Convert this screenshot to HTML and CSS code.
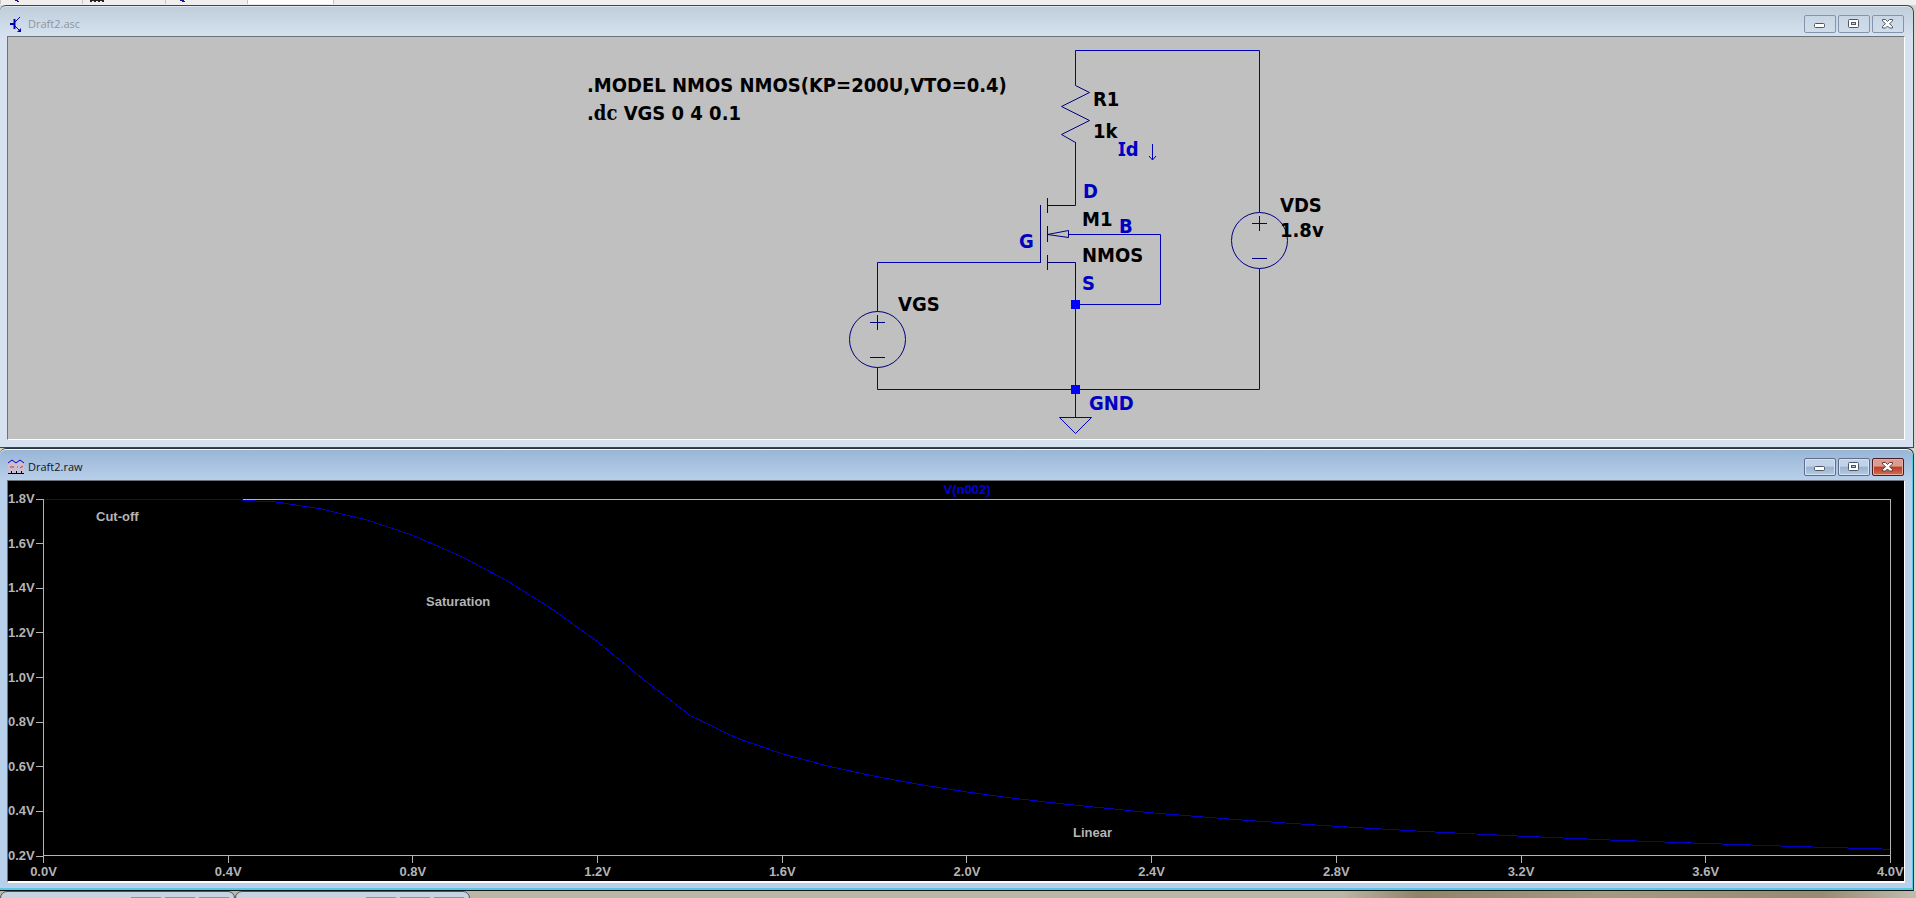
FILE: index.html
```html
<!DOCTYPE html>
<html lang="en">
<head>
<meta charset="utf-8">
<title>Draft2</title>
<link rel="stylesheet" href="styles.css">
</head>
<body>
<div class="tabstrip" aria-hidden="true">
  <svg class="tabstrip-art" width="340" height="4" viewBox="0 0 340 4">
    <path d="M247 0h87v4h-87z" fill="#fff"/>
    <path d="M.5 0v4M82.500 0v4M165.500 0v4M247.500 0v4M333.500 0v4" stroke="#c4c4c4"/>
    <path d="M15 0h3v1h1v1h-2v-1h-2zM180 0h4v1h1v1h-3v-1h-2z" fill="#1414a0"/>
    <path d="M90 0h14v1h-14zM90 1h2v1h-2zM94 1h2v1h-2zM98 1h2v1h-2zM102 1h2v1h-2z" fill="#222"/>
  </svg>
</div>

<main class="workspace">
  <section class="window" aria-label="Draft2.asc">
    <header class="titlebar">
      <svg class="title-icon" width="16" height="18" viewBox="-2 0 16 18" fill="none" stroke="#0000b4">
        <path d="M0 9h4" stroke-width="2"/><path d="M4.500 4v10" stroke-width="2"/><path d="M5 7l5-5M5 11l4 4"/><path d="M11 17v-4l-4 4z" fill="#0000b4" stroke="none"/>
      </svg>
      <h1 class="title">Draft2.asc</h1>
      <div class="controls">
        <button class="control" aria-label="Minimize"><svg width="12" height="10" viewBox="0 0 12 10"><rect x=".5" y="4.500" width="10" height="4" rx="1" fill="#fff" stroke="#4c5664"/></svg></button>
        <button class="control" aria-label="Maximize"><svg width="12" height="10" viewBox="0 0 12 10"><rect x=".5" y=".5" width="10" height="8" rx="1" fill="#fff" stroke="#4c5664"/><rect x="3.500" y="3.500" width="4" height="2" fill="#c6d4e4" stroke="#4c5664"/></svg></button>
        <button class="control" aria-label="Close"><svg width="12" height="10" viewBox="0 0 12 10"><path d="M.5 .5h3l2 2 2-2h3v1.500l-3 2.700 3 2.800v1.500h-3l-2-2-2 2h-3v-1.500l3-2.800-3-2.700z" fill="#fff" stroke="#4c5664"/></svg></button>
      </div>
    </header>
    <div class="client schematic">
      <svg class="schematic-art" viewBox="8 37 1896 402" role="img" aria-label="NMOS circuit">
        <g class="wire">
          <path d="M1075.500 85.500V50.500H1259.500V212.500M1259.500 268.500V389.500H877.500V367.500M1075.500 142V205.500M877.500 311.500V262.500H1040.500M1068.500 234.500H1160.500V304.500H1075.500M1075.500 290V417.500"/>
          <path d="M1059.500 417.500H1091.500L1075.500 433.500Z"/>
        </g>
        <g class="part">
          <path d="M1075.500 85.500L1089.500 92.500L1061.500 106.500L1089.500 120.500L1061.500 134.500L1075.500 142.500"/>
          <path d="M1040.500 205V263M1047.500 198V213M1047.500 226V242M1047.500 255V270M1047.500 205.500H1075.500M1047.500 262.500H1075.500V290M1047.500 234.500L1068.500 230.500V237.500Z"/>
          <circle cx="877.500" cy="339.500" r="28"/>
          <path d="M870 322.500h15M877.500 315v15M870 357.500h15"/>
          <circle cx="1259.500" cy="240.500" r="28"/>
          <path d="M1252 223.500h15M1259.500 216v15M1252 258.500h15"/>
        </g>
        <path class="node" d="M1071 300h9v9h-9zM1071 385h9v9h-9z"/>
        <g class="text">
          <text x="587" y="92">.MODEL NMOS NMOS(KP=200U,VTO=0.4)</text>
          <text x="587" y="120">.<tspan class="alt">dc</tspan> VGS 0 4 0.1</text>
          <text x="1093" y="106">R1</text>
          <text x="1093" y="138">1k</text>
          <text x="1082" y="226">M1</text>
          <text x="1082" y="262">NMOS</text>
          <text x="898" y="311">VGS</text>
          <text x="1280" y="212">VDS</text>
          <text x="1280" y="237">1.8v</text>
        </g>
        <g class="text label">
          <text x="1118" y="156"><tspan class="barred">I</tspan>d</text>
          <text x="1083" y="198">D</text>
          <text x="1119" y="233">B</text>
          <text x="1019" y="248">G</text>
          <text x="1082" y="290">S</text>
          <text x="1089" y="410">GND</text>
        </g>
        <path class="current" d="M1152.500 144V159.500M1149 156L1152.500 160L1156 156"/>
      </svg>
    </div>
  </section>

  <section class="window active" aria-label="Draft2.raw">
    <header class="titlebar">
      <svg class="title-icon" width="16" height="18" viewBox="0 0 16 18" fill="none">
        <rect y="4" width="16" height="11" fill="#d8bcc8" opacity=".7"/>
        <path d="M0 5l4-3 4 3 4-3 4 3" stroke="#0000c8"/><path d="M2 9h4M9 9h1M12 10l3-2" stroke="#c83232"/><path d="M0 15.500h16M3.500 13v2M8.500 13v2M13.500 13v2" stroke="#000"/>
      </svg>
      <h2 class="title">Draft2.raw</h2>
      <div class="controls">
        <button class="control" aria-label="Minimize"><svg width="12" height="10" viewBox="0 0 12 10"><rect x=".5" y="4.500" width="10" height="4" rx="1" fill="#fff" stroke="#4c5664"/></svg></button>
        <button class="control" aria-label="Maximize"><svg width="12" height="10" viewBox="0 0 12 10"><rect x=".5" y=".5" width="10" height="8" rx="1" fill="#fff" stroke="#4c5664"/><rect x="3.500" y="3.500" width="4" height="2" fill="#a8c0dc" stroke="#4c5664"/></svg></button>
        <button class="control close" aria-label="Close"><svg width="12" height="10" viewBox="0 0 12 10"><path d="M.5 .5h3l2 2 2-2h3v1.500l-3 2.700 3 2.800v1.500h-3l-2-2-2 2h-3v-1.500l3-2.800-3-2.700z" fill="#fff" stroke="#5c3a40"/></svg></button>
      </div>
    </header>
    <div class="client chart">
      <div class="trace-name">V(n002)</div>
      <div class="y-axis">
        <span>1.8V</span><span>1.6V</span><span>1.4V</span><span>1.2V</span><span>1.0V</span><span>0.8V</span><span>0.6V</span><span>0.4V</span><span>0.2V</span>
      </div>
      <div class="plot">
        <svg class="trace" viewBox="0 0 4000 1600" preserveAspectRatio="none" role="img" aria-label="V(n002) against VGS">
          <polyline points="0,-2 430,-2 431,2 500,8 600,40 700,90 800,160 900,250 1000,360 1100,490 1200,640 1300,810 1400,971 1500,1072 1600,1144 1700,1200 1800,1245 1900,1283 2000,1316 2100,1344 2200,1368 2400,1410 2600,1443 2800,1471 3000,1495 3200,1515 3400,1533 3600,1548 3800,1562 4000,1574"/>
        </svg>
        <span class="region cutoff">Cut-off</span>
        <span class="region saturation">Saturation</span>
        <span class="region linear">Linear</span>
      </div>
      <div class="x-axis">
        <span>0.0V</span><span>0.4V</span><span>0.8V</span><span>1.2V</span><span>1.6V</span><span>2.0V</span><span>2.4V</span><span>2.8V</span><span>3.2V</span><span>3.6V</span><span>4.0V</span>
      </div>
    </div>
  </section>
</main>

<footer class="minimized" aria-hidden="true">
  <div class="stub"><i></i><i></i><i></i></div>
  <div class="stub"><i></i><i></i><i></i></div>
</footer>
</body>
</html>
```

FILE: styles.css
```css
* { box-sizing: border-box; }

body {
  margin: 0;
  min-height: 100vh;
  display: flex;
  flex-direction: column;
  background: #d6d3cb;
  font-family: "Open Sans", "Noto Sans", sans-serif;
}

.tabstrip { height: 5px; background: #f0efee; overflow: hidden; }
.tabstrip-art { display: block; }

.workspace {
  flex: 1;
  display: flex;
  flex-direction: column;
  padding-right: 2px;
}

.window {
  display: flex;
  flex-direction: column;
  padding: 0 8px 7px 7px;
  border: solid #3c444e;
  border-width: 1px 1px 1px 0;
  border-radius: 6px 7px 0 0;
  background: linear-gradient(#bfcddb, #d6e2ef 31px);
  box-shadow: inset 0 1px #dfe8f0;
}

.window.active {
  flex: 1;
  border-color: #2c343c;
  border-bottom-color: #101418;
  background: linear-gradient(#98b4d6, #b9d0ea 32px);
  box-shadow: inset 0 1px #f4f8fc, inset -1px -2px #58c8e4;
}

.titlebar {
  height: 30px;
  padding: 5px 1px 0 1px;
  display: flex;
  align-items: center;
  gap: 4px;
}
.active .titlebar { height: 31px; }

.title-icon { flex: none; }

.title {
  flex: 1;
  margin: 0;
  font-size: 11px;
  font-weight: 400;
  line-height: 16px;
  color: #8d959e;
}
.active .title { color: #10161e; }

.controls { display: flex; gap: 2px; }

.control {
  width: 32px;
  height: 18px;
  padding: 0;
  display: grid;
  place-items: center;
  border: 1px solid #8395ae;
  border-radius: 2px;
  background: linear-gradient(#c8d6e4, #d0dcea);
}
.active .control {
  border-color: #5c6e8c;
  background: linear-gradient(#c2d3e8 45%, #98b2d0 50%, #b4cbe6);
  box-shadow: inset 0 0 0 1px #d4e2f2;
}
.active .close {
  border-color: #4c1c24;
  background: linear-gradient(#dc9c90 45%, #b83c24 50%, #d07050);
  box-shadow: inset 0 0 0 1px #e4aca0;
}

.client {
  border: 1px solid #fff;
  border-top-color: #6c7278;
  border-left-color: #6c7278;
}

.schematic { background: #c0c0c0; }
.schematic-art { display: block; width: 100%; }
.wire, .part, .current { fill: none; stroke: #0000b8; }
.part { stroke: #000080; }
.node { fill: #0000ff; }
.text {
  font-family: "DejaVu Sans Condensed", "Noto Sans", sans-serif;
  font-size: 20px;
  font-weight: 700;
  fill: #000;
}
.label { fill: #0000c0; }
.alt { font-family: "DejaVu Serif Condensed", "DejaVu Serif", serif; }
.barred { font-family: "Noto Sans", sans-serif; }

.chart {
  flex: 1;
  display: grid;
  grid-template: 18px 1fr 25px / 35px 1fr;
  padding-right: 13px;
  border-bottom-width: 2px;
  background: #000;
  color: #b4b4b4;
  font: 700 13px/18px "Liberation Sans", sans-serif;
}

.trace-name {
  grid-area: 1 / 2;
  text-align: center;
  color: #0000d8;
}

.y-axis {
  grid-area: 2 / 1;
  margin: -9px 0;
  display: flex;
  flex-direction: column;
  justify-content: space-between;
}
.y-axis span { display: flex; align-items: center; justify-content: space-between; }
.y-axis span::after { content: ""; width: 7px; height: 1px; background: #b4b4b4; }

.plot { grid-area: 2 / 2; position: relative; border: 1px solid #b4b4b4; }
.trace { position: absolute; inset: 0; width: 100%; height: 100%; overflow: visible; }
.trace polyline {
  fill: none;
  stroke: #0000c8;
  stroke-width: 1px;
  vector-effect: non-scaling-stroke;
  shape-rendering: crispEdges;
}

.region { position: absolute; }
.cutoff { left: 52px; top: 8px; }
.saturation { left: 382px; top: 93px; }
.linear { left: 1029px; bottom: 13px; }

.x-axis { grid-area: 3 / 2; display: flex; justify-content: space-between; }
.x-axis span {
  width: 1px;
  display: flex;
  flex-direction: column;
  align-items: center;
  line-height: 18px;
}
.x-axis span::before { content: ""; flex: none; width: 1px; height: 7px; background: #b4b4b4; }

.minimized {
  height: 7px;
  display: flex;
  overflow: hidden;
  background: linear-gradient(90deg, #bcb6a4 70%, #8f8468 74%, #a49a80 84%, #968b70 95%, #c0bcac);
}
.stub {
  width: 235px;
  height: 20px;
  padding: 5px 4px 0;
  display: flex;
  justify-content: flex-end;
  gap: 2px;
  border: 1px solid #4a525c;
  border-radius: 7px 7px 0 0;
  background: #c6d3e0;
}
.stub i { width: 32px; height: 18px; border: 1px solid #8395ae; border-radius: 2px; }
```
